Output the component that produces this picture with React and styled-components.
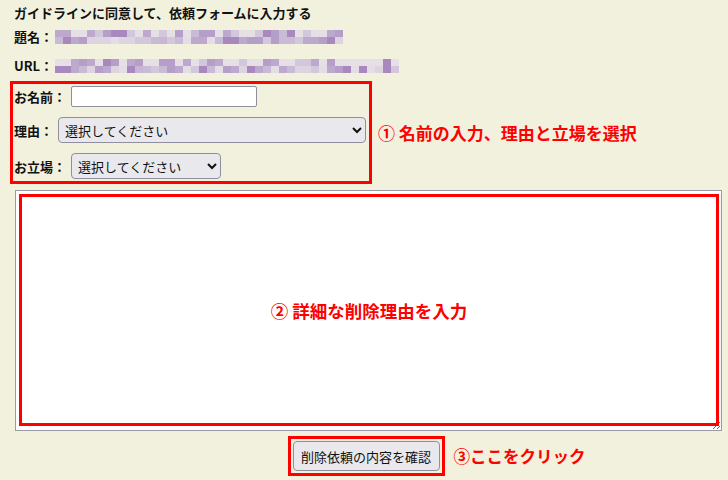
import { styled, createGlobalStyle } from "styled-components";

const GlobalStyle = createGlobalStyle`
	html, body {
		margin: 0;
		padding: 0;
		background: #f2f1de;
	}
	body {
		font-family: "Noto Sans CJK JP", "Noto Sans", sans-serif;
		color: #111;
	}
`;

const PALETTE = ["#c7b7d5", "#d3c7dc", "#b59ec8", "#ddd3e1", "#a888bd", "#c9bad6", "#e4dde6", "#bca9cd"];

// deterministic "mosaic" so the blurred text looks the same every run
function mosaic(cols, seed) {
	const rows = [];
	let s = seed;
	for (let r = 0; r < 2; r++) {
		const row = [];
		for (let c = 0; c < cols; c++) {
			s = (s * 9301 + 49297) % 233280;
			const idx = Math.floor((s / 233280) * PALETTE.length);
			row.push(r === 0 && idx % 3 === 0 ? "#e6e0e6" : PALETTE[idx]);
		}
		rows.push(row);
	}
	return rows;
}

function Blurred({ cols, seed }) {
	const rows = mosaic(cols, seed);
	return (
		<Mosaic>
			{rows.map((row, r) => (
				<MosaicRow key={r}>
					{row.map((color, c) => (
						<Tile key={c} $color={color} />
					))}
				</MosaicRow>
			))}
		</Mosaic>
	);
}

function App() {
	return (
		<Page>
			<GlobalStyle />
			<Title>ガイドラインに同意して、依頼フォームに入力する</Title>
			<MetaRow>
				<Label>題名：</Label>
				<Blurred cols={36} seed={17} />
			</MetaRow>
			<MetaRow $gap={14}>
				<Label>URL：</Label>
				<Blurred cols={43} seed={91} />
			</MetaRow>

			<FieldsLine>
				<RedBox>
					<FieldRow>
						<Label>お名前：</Label>
						<NameInput type="text" />
					</FieldRow>
					<FieldRow>
						<Label>理由：</Label>
						<Select $width={310} defaultValue="">
							<option value="">選択してください</option>
						</Select>
					</FieldRow>
					<FieldRow>
						<Label>お立場：</Label>
						<Select $width={150} defaultValue="">
							<option value="">選択してください</option>
						</Select>
					</FieldRow>
				</RedBox>
				<Note $size={17}>① 名前の入力、理由と立場を選択</Note>
			</FieldsLine>

			<TextAreaWrap>
				<DetailArea />
				<Overlay>
					<Note $size={17.5}>② 詳細な削除理由を入力</Note>
				</Overlay>
			</TextAreaWrap>

			<ButtonLine>
				<span />
				<ButtonBox>
					<ConfirmButton type="button">削除依頼の内容を確認</ConfirmButton>
				</ButtonBox>
				<Note $left={9} $size={16.5}>③ここをクリック</Note>
			</ButtonLine>
		</Page>
	);
}

export default App;

const Page = styled.div`
	width: 728px;
	height: 480px;
	box-sizing: border-box;
	padding: 5px 6px 0 10px;
	overflow: hidden;
`;
const Title = styled.div`
	padding-left: 4px;
	font-size: 13px;
	font-weight: 700;
	line-height: 16px;
`;
const MetaRow = styled.div`
	display: flex;
	align-items: center;
	gap: 2px;
	padding-left: 4px;
	margin-top: ${(p) => p.$gap ?? 8}px;
	height: 15px;
`;
const Label = styled.span`
	font-size: 13px;
	font-weight: 700;
	white-space: nowrap;
	line-height: 15px;
`;
const Mosaic = styled.div`
	display: flex;
	flex-direction: column;
`;
const MosaicRow = styled.div`
	display: flex;
	height: 7px;
`;
const Tile = styled.div`
	width: 8px;
	height: 7px;
	background: ${(p) => p.$color};
`;
const FieldsLine = styled.div`
	display: flex;
	align-items: center;
	gap: 6px;
	margin-top: 8px;
`;
const RedBox = styled.div`
	border: 3px solid #ff0000;
	padding: 2px 3px 2px 1px;
	box-sizing: border-box;
	width: 362px;
	display: flex;
	flex-direction: column;
	gap: 10px;
`;
const FieldRow = styled.div`
	display: flex;
	align-items: center;
	gap: 5px;
`;
const NameInput = styled.input`
	width: 186px;
	height: 21px;
	box-sizing: border-box;
	border: 1px solid #8f8f9d;
	border-radius: 2px;
	background: #fff;
	padding: 1px 4px;
	font-size: 13px;
`;
const Select = styled.select`
	width: ${(p) => p.$width}px;
	height: 26px;
	box-sizing: border-box;
	border: 1px solid #8f8f9d;
	border-radius: 4px;
	background-color: #e9e9ed;
	font-family: "Noto Sans CJK JP", sans-serif;
	font-size: 13px;
	color: #111;
	padding: 0 2px;
`;
const Note = styled.span`
	color: #ff0000;
	font-size: ${(p) => p.$size ?? 16}px;
	font-weight: 700;
	white-space: nowrap;
	padding-left: ${(p) => p.$left ?? 0}px;
`;
const TextAreaWrap = styled.div`
	position: relative;
	margin: 6px 0 0 5px;
	width: 707px;
	height: 241px;
`;
const DetailArea = styled.textarea`
	display: block;
	width: 100%;
	height: 100%;
	box-sizing: border-box;
	border: 1px solid #9a9aa6;
	background: #fff;
	margin: 0;
	resize: both;
`;
const Overlay = styled.div`
	position: absolute;
	top: 4px;
	left: 4px;
	right: 3px;
	bottom: 5px;
	border: 3px solid #ff0000;
	display: flex;
	align-items: center;
	justify-content: center;
	pointer-events: none;
`;
const ButtonLine = styled.div`
	display: grid;
	grid-template-columns: 1fr auto 1fr;
	align-items: center;
	margin-top: 5px;
`;
const ButtonBox = styled.div`
	border: 3px solid #ff0000;
	padding: 2px;
	width: 157px;
	height: 40px;
	box-sizing: border-box;
	display: flex;
`;
const ConfirmButton = styled.button`
	flex: 1;
	border: 1px solid #8f8f9d;
	border-radius: 4px;
	background: #e9e9ed;
	font-family: "Noto Sans CJK JP", sans-serif;
	font-size: 13px;
	color: #111;
	padding: 0;
`;
